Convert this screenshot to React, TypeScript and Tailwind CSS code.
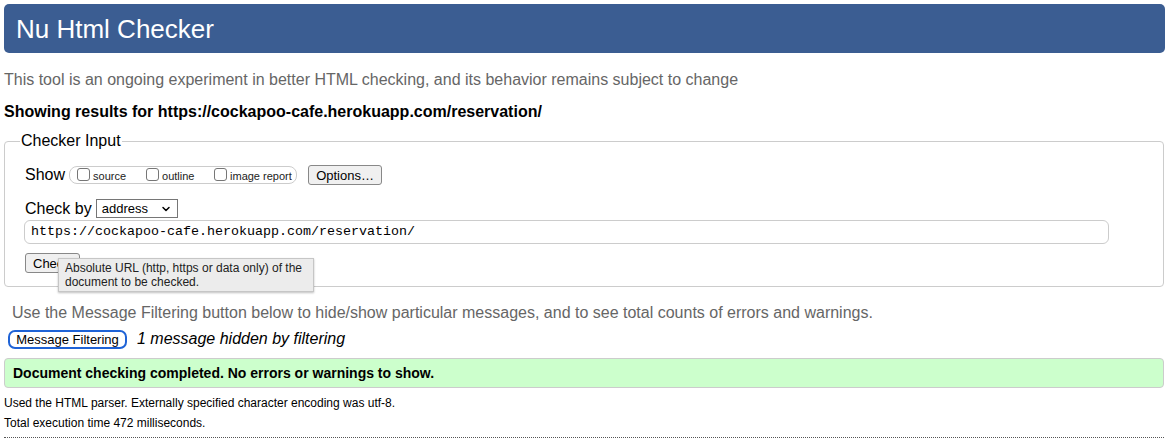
import { ChevronDown } from "lucide-react";

function Checkbox({ label }: { label: string }) {
  return (
    <label className="flex items-end gap-[3px]">
      <span className="mb-[1px] h-[13px] w-[13px] rounded-[3px] border border-[#767676] bg-white" />
      <span className="text-[11px] leading-none text-[#222]">{label}</span>
    </label>
  );
}

export default function App() {
  return (
    <div className="w-[1172px] h-[442px] overflow-hidden bg-white px-[4px] pt-[4px] font-['Liberation_Sans',Arial,sans-serif] text-black">
      <div className="mr-[3px] flex h-[49px] items-center rounded-[5px] bg-[#3b5d92] px-[12px]">
        <h1 className="text-[26px] leading-none text-white">Nu Html Checker</h1>
      </div>

      <p className="mt-[18px] text-[16px] leading-[18px] text-[#666]">
        This tool is an ongoing experiment in better HTML checking, and its behavior remains subject to change
      </p>
      <p className="mt-[14px] text-[16px] font-bold leading-[18px]">
        Showing results for https://cockapoo-cafe.herokuapp.com/reservation/
      </p>

      <fieldset className="mt-[11px] mr-[4px] rounded-[4px] border border-[#ccc] pl-[20px] pr-[54px] pb-[13px] pt-[15px]">
        <legend className="-ml-[5px] px-[1px] text-[16px] leading-[18px]">Checker Input</legend>
        <div className="flex items-center">
          <span className="text-[16px] leading-none">Show</span>
          <div className="ml-[4px] flex h-[18px] w-[228px] items-center rounded-[8px] border border-[#ccc] pl-[7px]">
            <div className="w-[69px]"><Checkbox label="source" /></div>
            <div className="w-[68px]"><Checkbox label="outline" /></div>
            <Checkbox label="image report" />
          </div>
          <button className="ml-[11px] h-[20px] w-[74px] rounded-[3px] border border-[#888] bg-[#f0f0f0] text-[13px] leading-none">
            Options…
          </button>
        </div>
        <div className="mt-[14px] flex items-center">
          <span className="text-[16px] leading-none">Check by</span>
          <div className="ml-[4px] flex h-[19px] w-[82px] items-center justify-between border border-[#767676] px-[5px] text-[13px]">
            <span>address</span>
            <ChevronDown size={12} strokeWidth={3} />
          </div>
        </div>
        <div className="mt-[2px] -ml-[1px] flex h-[24px] items-center rounded-[6px] border border-[#ccc] pl-[6px] font-['Liberation_Mono',monospace] text-[13.33px]">
          https://cockapoo-cafe.herokuapp.com/reservation/
        </div>
        <div className="relative mt-[9px] flex">
          <button className="h-[20px] w-[55px] rounded-[3px] border border-[#888] bg-[#f0f0f0] text-left pl-[7px] text-[13px] leading-none">
            Check
          </button>
          <div className="absolute left-[33px] top-[5px] w-[256px] border border-[#c6c6c6] bg-[#ececec] px-[6px] pt-[2px] pb-[2px] text-[12px] leading-[14px] text-[#222] shadow-[0_1px_2px_rgba(0,0,0,0.25)]">
            Absolute URL (http, https or data only) of the document to be checked.
          </div>
        </div>
      </fieldset>

      <p className="mt-[17px] pl-[8px] text-[16px] leading-[18px] text-[#666]">
        Use the Message Filtering button below to hide/show particular messages, and to see total counts of errors and warnings.
      </p>
      <div className="mt-[5px] flex items-center">
        <button className="ml-[4px] h-[19px] w-[119px] rounded-[7px] border-2 border-[#1f63d6] text-[13px] leading-none">
          Message Filtering
        </button>
        <span className="ml-[10px] text-[16px] italic">1 message hidden by filtering</span>
      </div>
      <div className="mt-[7px] mr-[4px] flex h-[30px] items-center rounded-[4px] border border-[#ccc] bg-[#ccffcc] pl-[8px] text-[14px] font-bold">
        Document checking completed. No errors or warnings to show.
      </div>
      <p className="mt-[8px] text-[12px] leading-[14px]">
        Used the HTML parser. Externally specified character encoding was utf-8.
      </p>
      <p className="mt-[6px] text-[12px] leading-[14px]">Total execution time 472 milliseconds.</p>
      <div className="mt-[7px] mr-[4px] border-b border-dotted border-[#555]" />
    </div>
  );
}
